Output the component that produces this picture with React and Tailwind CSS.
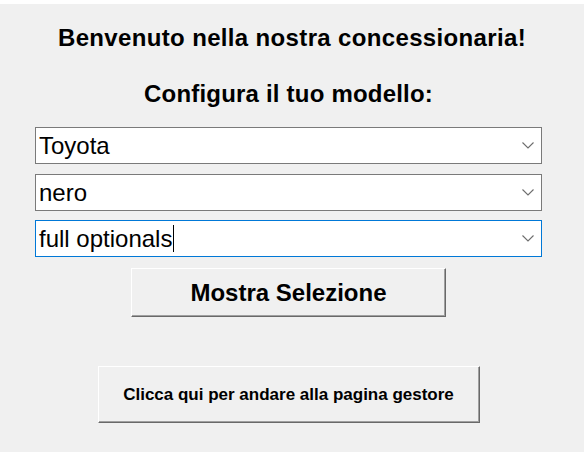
import React from 'react';

const Chevron = () => (
  <svg width="12" height="7" viewBox="0 0 12 7" className="shrink-0">
    <polyline points="0.5,0.5 6,6 11.5,0.5" fill="none" stroke="#6d6d6d" strokeWidth="1.1" />
  </svg>
);

const Combo = ({ value, focused, caret }) => (
  <div
    className={`flex h-[37px] w-full items-center justify-between border bg-white pl-[3px] pr-[7px] ${
      focused ? 'border-[#0078d7]' : 'border-[#7a7a7a]'
    }`}
  >
    <span className="flex items-center text-[24px] leading-[35px] text-black">
      {value}
      {caret && <span className="ml-[1px] inline-block h-[27px] w-[1px] bg-black"></span>}
    </span>
    <Chevron />
  </div>
);

const App = () => {
  return (
    <div
      className="min-h-[452px] w-[584px] bg-[#f0f0f0] text-black"
      style={{ fontFamily: '"Liberation Sans", Arial, sans-serif' }}
    >
      <div className="h-[4px] bg-white"></div>

      <h1 className="mt-[20px] text-center text-[24px] font-bold leading-[28px] tracking-[0.35px]">
        Benvenuto nella nostra concessionaria!
      </h1>

      <div className="ml-[35px] flex w-[507px] flex-col">
        <h2 className="mt-[28px] text-center text-[24px] font-bold leading-[28px] tracking-[0.2px]">
          Configura il tuo modello:
        </h2>

        <div className="mt-[19px]">
          <Combo value="Toyota" />
        </div>
        <div className="mt-[10px]">
          <Combo value="nero" />
        </div>
        <div className="mt-[9px]">
          <Combo value="full optionals" focused caret />
        </div>

        <button className="mx-auto mt-[11px] flex h-[49px] w-[315px] items-center justify-center border border-b-[#696969] border-l-white border-r-[#696969] border-t-white bg-[#f0f0f0] text-[24px] font-bold shadow-[inset_-1px_-1px_0_#a0a0a0]">
          Mostra Selezione
        </button>

        <button className="mx-auto mt-[49px] flex h-[57px] w-[382px] items-center justify-center border border-b-[#696969] border-l-white border-r-[#696969] border-t-white bg-[#f0f0f0] text-[17px] font-bold shadow-[inset_-1px_-1px_0_#a0a0a0]">
          Clicca qui per andare alla pagina gestore
        </button>
      </div>
    </div>
  );
};

export default App;
